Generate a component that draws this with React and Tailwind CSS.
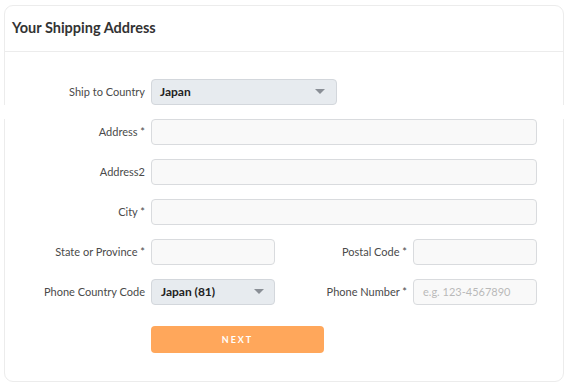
import React from "react";

function Caret() {
  return (
    <svg width="10" height="6" viewBox="0 0 10 6" className="shrink-0">
      <path d="M0 0 L10 0 L5 5 Z" fill="#8a8f96" />
    </svg>
  );
}

function Label({ children, w = "w-[146px]" }) {
  return (
    <div className={`${w} shrink-0 pr-[6px] text-right text-[11px] text-[#4a4a4a]`}>{children}</div>
  );
}

function Input({ w = "w-[386px]", placeholder }) {
  return (
    <div className={`${w} h-[26px] shrink-0 rounded-[4px] border border-[#d9dbde] bg-[#f9f9f9] px-[9px] flex items-center text-[11px] text-[#b9b9b9]`}>
      {placeholder}
    </div>
  );
}

export default function App() {
  return (
    <div className="bg-white w-[567px] h-[385px] pt-[5px] pl-[4px]" style={{ fontFamily: "Lato, 'Open Sans', sans-serif" }}>
      <div className="w-[560px] h-[377px] rounded-[9px] border border-[#ececec] bg-white flex flex-col">
        <div className="h-[46px] border-b border-[#ececec] flex items-center pl-[7px] pb-[1px]">
          <span className="text-[14.5px] font-bold text-[#333]">Your Shipping Address</span>
        </div>
        <div className="flex flex-col pt-[27px]">
          <div className="flex items-center h-[26px]">
            <Label>Ship to Country</Label>
            <div className="w-[186px] h-[26px] rounded-[4px] border border-[#d3d7dc] bg-[#e7ebef] flex items-center justify-between pl-[8px] pr-[11px]">
              <span className="text-[12px] font-bold text-[#222]">Japan</span>
              <Caret />
            </div>
          </div>
          <div className="-mx-px h-[14px] bg-white relative" />
          <div className="flex items-center h-[26px]">
            <Label>Address *</Label>
            <Input />
          </div>
          <div className="flex items-center h-[26px] mt-[14px]">
            <Label>Address2</Label>
            <Input />
          </div>
          <div className="flex items-center h-[26px] mt-[14px]">
            <Label>City *</Label>
            <Input />
          </div>
          <div className="flex items-center h-[26px] mt-[14px]">
            <Label>State or Province *</Label>
            <Input w="w-[124px]" />
            <Label w="w-[138px]">Postal Code *</Label>
            <Input w="w-[124px]" />
          </div>
          <div className="flex items-center h-[26px] mt-[14px]">
            <Label>Phone Country Code</Label>
            <div className="w-[124px] h-[26px] shrink-0 rounded-[4px] border border-[#d3d7dc] bg-[#e7ebef] flex items-center justify-between pl-[9px] pr-[10px]">
              <span className="text-[12px] font-bold text-[#222]">Japan (81)</span>
              <Caret />
            </div>
            <Label w="w-[138px]">Phone Number *</Label>
            <Input w="w-[124px]" placeholder="e.g. 123-4567890" />
          </div>
          <div className="flex mt-[21px] pl-[146px]">
            <div className="w-[173px] h-[27px] rounded-[4px] bg-[#ffa75b] flex items-center justify-center pt-[1px]">
              <span className="text-[9px] font-bold text-white tracking-[2px]">NEXT</span>
            </div>
          </div>
        </div>
      </div>
    </div>
  );
}
